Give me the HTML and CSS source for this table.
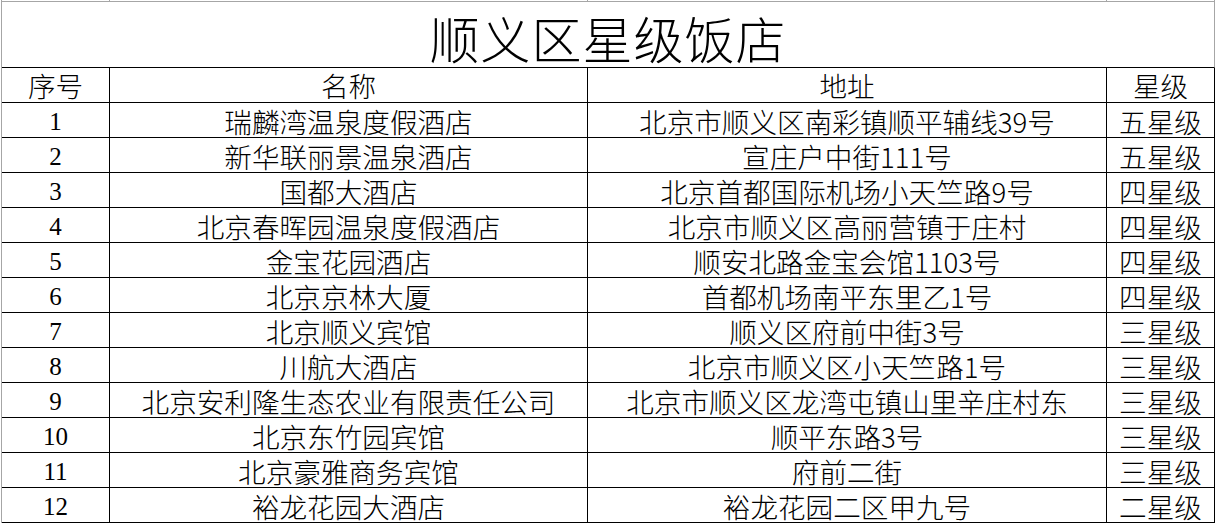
FILE: index.html
```html
<!DOCTYPE html>
<html lang="zh-CN">
<head>
<meta charset="utf-8">
<title>顺义区星级饭店</title>
<link rel="stylesheet" href="styles.css">
</head>
<body>
<div class="sheet">
  <div class="stub"></div><div class="stub"></div><div class="stub"></div><div class="stub"></div>
  <div class="title">顺义区星级饭店</div>
  <div class="cell head">序号</div>
  <div class="cell head">名称</div>
  <div class="cell head">地址</div>
  <div class="cell head">星级</div>

  <div class="cell num">1</div><div class="cell">瑞麟湾温泉度假酒店</div><div class="cell addr">北京市顺义区南彩镇顺平辅线39号</div><div class="cell">五星级</div>
  <div class="cell num">2</div><div class="cell">新华联丽景温泉酒店</div><div class="cell addr">宣庄户中街111号</div><div class="cell">五星级</div>
  <div class="cell num">3</div><div class="cell">国都大酒店</div><div class="cell addr">北京首都国际机场小天竺路9号</div><div class="cell">四星级</div>
  <div class="cell num">4</div><div class="cell">北京春晖园温泉度假酒店</div><div class="cell addr">北京市顺义区高丽营镇于庄村</div><div class="cell">四星级</div>
  <div class="cell num">5</div><div class="cell">金宝花园酒店</div><div class="cell addr">顺安北路金宝会馆1103号</div><div class="cell">四星级</div>
  <div class="cell num">6</div><div class="cell">北京京林大厦</div><div class="cell addr">首都机场南平东里乙1号</div><div class="cell">四星级</div>
  <div class="cell num">7</div><div class="cell">北京顺义宾馆</div><div class="cell addr">顺义区府前中街3号</div><div class="cell">三星级</div>
  <div class="cell num">8</div><div class="cell">川航大酒店</div><div class="cell addr">北京市顺义区小天竺路1号</div><div class="cell">三星级</div>
  <div class="cell num">9</div><div class="cell">北京安利隆生态农业有限责任公司</div><div class="cell addr">北京市顺义区龙湾屯镇山里辛庄村东</div><div class="cell">三星级</div>
  <div class="cell num">10</div><div class="cell">北京东竹园宾馆</div><div class="cell addr">顺平东路3号</div><div class="cell">三星级</div>
  <div class="cell num">11</div><div class="cell">北京豪雅商务宾馆</div><div class="cell addr">府前二街</div><div class="cell">三星级</div>
  <div class="cell num">12</div><div class="cell">裕龙花园大酒店</div><div class="cell addr">裕龙花园二区甲九号</div><div class="cell">二星级</div>
</div>
</body>
</html>
```

FILE: styles.css
```css
html, body {
  margin: 0;
  padding: 0;
  background: #ffffff;
}

body {
  font-family: "Noto Sans CJK SC", "Liberation Serif", sans-serif;
  color: #000000;
  overflow: hidden;
}

.sheet {
  display: grid;
  grid-template-columns: 108px 478px 519px 108px;
  margin-left: 1px;
  border-left: 1px solid #a6a6a6;
  width: 1213px;
}

.stub {
  height: 1px;
  border-right: 1px solid #a6a6a6;
}

.title {
  grid-column: 1 / 5;
  border-top: 1px solid #a6a6a6;
  border-bottom: 1px solid #000000;
  border-right: 1px solid #a6a6a6;
  display: flex;
  align-items: center;
  justify-content: center;
  padding-top: 4px;
  box-sizing: content-box;
  height: 61px;
  font-size: 50px;
  font-weight: 300;
  line-height: 1;
  letter-spacing: 1px;
}

.cell {
  border-right: 1px solid #000000;
  border-bottom: 1px solid #000000;
  display: flex;
  align-items: center;
  justify-content: center;
  font-size: 27.6px;
  font-weight: 300;
  line-height: 1;
  padding-top: 4px;
  box-sizing: border-box;
  height: 35px;
  white-space: nowrap;
}

.head {
  padding-top: 2px;
}

.num {
  font-family: "Liberation Serif", serif;
  font-weight: 400;
  font-size: 25px;
  padding-top: 3px;
}

.addr {
  font-family: "Noto Sans CJK SC", sans-serif;
}
```
